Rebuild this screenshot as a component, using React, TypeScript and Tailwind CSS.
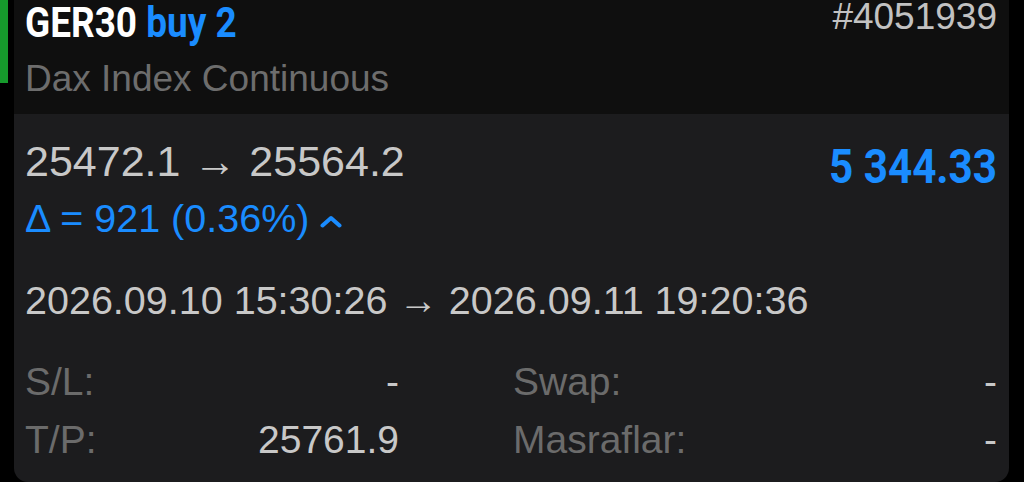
import React from 'react';

const sans = { fontFamily: '"Liberation Sans", Arial, sans-serif' };
const cond = { fontFamily: 'Roboto, "Liberation Sans", sans-serif' };

function Chevron(): JSX.Element {
  return (
    <svg width="22" height="13" viewBox="0 0 22 13" className="ml-[11px] mt-[6px]">
      <polyline points="2.5,10.5 11,3 19.5,10.5" fill="none" stroke="#1a8cff" strokeWidth="4" strokeLinecap="round" strokeLinejoin="round" />
    </svg>
  );
}

const rows = [
  { label: 'S/L:', value: '-', label2: 'Swap:', value2: '-' },
  { label: 'T/P:', value: '25761.9', label2: 'Masraflar:', value2: '-' }
];

export default function App(): JSX.Element {
  return (
    <div className="flex h-[482px] w-[1024px] overflow-hidden bg-black" style={sans}>
      <div className="h-[83px] w-[8px] shrink-0 bg-[#169a2c]" />
      <div className="ml-[6px] flex w-[995px] shrink-0 flex-col">
        <header className="flex h-[114px] justify-between bg-[#0f0f0f] pl-[11px] pr-[12px]">
          <div className="flex flex-col">
            <p
              className="h-[46px] origin-left scale-x-[0.88] whitespace-nowrap text-[42px] font-bold leading-[46px]"
              style={cond}
            >
              <span className="text-white">GER30</span> <span className="text-[#1a8cff]">buy 2</span>
            </p>
            <p className="mt-[11px] text-[37px] leading-[44px] text-[#6d6d6d]">Dax Index Continuous</p>
          </div>
          <p className="text-[37px] leading-[34px] text-[#c2c2c2]">#4051939</p>
        </header>

        <section className="flex flex-1 flex-col rounded-b-[14px] bg-[#1c1c1e] pb-[11px] pl-[11px] pr-[12px] pt-[23px]">
          <div className="flex justify-between">
            <div className="flex flex-col">
              <p className="whitespace-nowrap text-[43px] leading-[48px] text-[#c8c8c8]">
                25472.1<span className="mx-[1px]"> → </span>25564.2
              </p>
              <div className="mt-[11px] flex items-center">
                <p className="whitespace-nowrap text-[39.5px] leading-[44px] text-[#1a8cff]">Δ = 921 (0.36%)</p>
                <Chevron />
              </div>
            </div>
            <p
              className="mt-[6px] origin-right scale-x-[0.88] whitespace-nowrap text-[48px] font-bold leading-[48px] text-[#1a8cff]"
              style={cond}
            >
              5 344.33
            </p>
          </div>

          <p className="mt-[38px] whitespace-nowrap text-[39.5px] leading-[44px] text-[#c8c8c8]">
            2026.09.10 15:30:26 → 2026.09.11 19:20:36
          </p>

          <div className="mt-[38px] grid grid-cols-[374px_1fr] gap-x-[114px] gap-y-[14px]">
            {rows.map((row) => (
              <React.Fragment key={row.label}>
                <div className="flex justify-between text-[39px] leading-[44px]">
                  <span className="text-[#6b6b6b]">{row.label}</span>
                  <span className="text-[#c8c8c8]">{row.value}</span>
                </div>
                <div className="flex justify-between text-[39px] leading-[44px]">
                  <span className="text-[#6b6b6b]">{row.label2}</span>
                  <span className="text-[#c8c8c8]">{row.value2}</span>
                </div>
              </React.Fragment>
            ))}
          </div>
        </section>
      </div>
    </div>
  );
}
